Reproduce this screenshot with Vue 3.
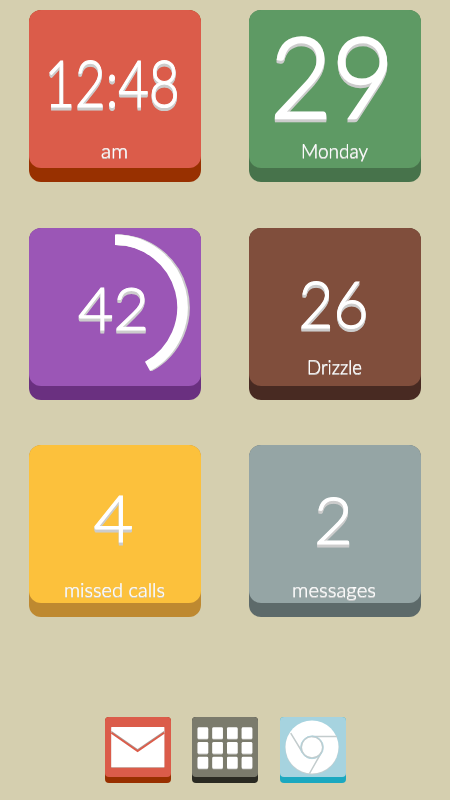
<script setup>
import { ref } from 'vue';

const tiles = ref([
    {
        name: 'clock', face: '#db5c4a', side: '#983000',
        value: { text: '12:48', x: 15.5, y: 96.5, size: 65, width: 135 },
        label: { text: 'am', x: 72, y: 148, width: 27 }
    },
    {
        name: 'date', face: '#5e9a64', side: '#47734b',
        value: { text: '29', x: 21, y: 107.5, size: 113, width: 124 },
        label: { text: 'Monday', x: 52, y: 148, width: 67 }
    },
    {
        name: 'battery', face: '#9b56b6', side: '#6a3080', level: 42,
        value: { text: '42', x: 49, y: 102, size: 60, width: 71 }
    },
    {
        name: 'weather', face: '#804e3c', side: '#482a22',
        value: { text: '26', x: 49.5, y: 100, size: 65, width: 70 },
        label: { text: 'Drizzle', x: 58, y: 146, width: 55 }
    },
    {
        name: 'calls', face: '#fcc13c', side: '#be8930',
        value: { text: '4', x: 64.5, y: 96.5, size: 66, width: 40 },
        label: { text: 'missed calls', x: 35, y: 152, width: 101 }
    },
    {
        name: 'messages', face: '#95a5a5', side: '#5d6a6a',
        value: { text: '2', x: 65, y: 98.5, size: 66, width: 39 },
        label: { text: 'messages', x: 43, y: 152, width: 84 }
    }
]);

const radius = 67.5;
const arc = (level) => {
    const angle = level / 100 * 2 * Math.PI;
    const x = 86 + radius * Math.sin(angle);
    const y = 79.3 - radius * Math.cos(angle);
    return `M86 ${79.3 - radius}A${radius} ${radius} 0 ${level > 50 ? 1 : 0} 1 ${x} ${y}`;
};
</script>

<template>
    <main class="home">
        <div class="tiles">
            <section v-for="tile in tiles" :key="tile.name" class="tile" :style="{ backgroundColor: tile.side }">
                <svg class="face" :style="{ backgroundColor: tile.face }" width="172" height="158" viewBox="0 0 172 158">
                    <g v-if="tile.level" class="gauge">
                        <path :d="arc(tile.level)" />
                    </g>
                    <text
                        class="value"
                        :class="tile.name"
                        :x="tile.value.x"
                        :y="tile.value.y"
                        :font-size="tile.value.size"
                        :textLength="tile.value.width"
                        lengthAdjust="spacingAndGlyphs"
                    >{{ tile.value.text }}</text>
                    <text
                        v-if="tile.label"
                        class="label"
                        :x="tile.label.x"
                        :y="tile.label.y"
                        :textLength="tile.label.width"
                        lengthAdjust="spacingAndGlyphs"
                    >{{ tile.label.text }}</text>
                </svg>
            </section>
        </div>

        <nav class="dock">
            <button class="mail" aria-label="Mail">
                <svg width="66" height="60" viewBox="0 0 66 60">
                    <path fill="#c9beb9" d="M6.3 10.7h53v40h-53z" />
                    <path fill="#fff" d="M6.3 10h53v40h-53z" />
                    <path fill="none" stroke="#aaa09c" stroke-width="1.2" d="M6.3 14.4L32.6 32.8L59.3 14.4" />
                    <path fill="none" stroke="#db5c4a" stroke-width="1.8" d="M6.3 15.7L32.6 34.1L59.3 15.7" />
                </svg>
            </button>
            <button class="apps" aria-label="Apps">
                <svg width="66" height="60" viewBox="0 0 66 60">
                    <template v-for="row in 3">
                        <g v-for="col in 4" :key="row + '-' + col">
                            <rect fill="#c9c9c6" :x="5.6 + (col - 1) * 14.7" :y="11 + (row - 1) * 14.8" width="10.6" height="11.6" rx="1.3" />
                            <rect fill="#fff" :x="5.6 + (col - 1) * 14.7" :y="10.2 + (row - 1) * 14.8" width="10.6" height="11.6" rx="1.3" />
                        </g>
                    </template>
                </svg>
            </button>
            <button class="browser" aria-label="Browser">
                <svg width="66" height="60" viewBox="0 0 66 60">
                    <circle fill="#c3cfd1" cx="32" cy="30.8" r="26.7" />
                    <circle fill="#fff" cx="32" cy="30" r="26.5" />
                    <g fill="none" stroke="#c3cccd" stroke-width="1.5">
                        <circle cx="32" cy="30.3" r="10.7" />
                        <path d="M32 19.4H57M10.7 16.2L22.5 35.5M41.2 35.8L29.5 56.5" />
                    </g>
                    <circle fill="none" stroke="#a6d3df" stroke-width=".7" cx="32" cy="30.3" r="11.4" />
                </svg>
            </button>
        </nav>
    </main>
</template>

<style>
body {
    background-color: #d5cfaf;
}
</style>

<style scoped>
.home {
    display: flex;
    flex-direction: column;
    align-items: center;
    box-sizing: border-box;
    width: 450px;
    height: 800px;
    padding: 10px 0 17px;
    background-color: #d5cfaf;
    font-family: Lato, "Liberation Sans", sans-serif;
}

.tiles {
    display: grid;
    grid-template-columns: 172px 172px;
    column-gap: 48px;
    row-gap: 45.5px;
}

.tile {
    height: 172px;
    border-radius: 12px;
}

.face {
    display: block;
    border-radius: 12px;
    overflow: visible;
}

.value {
    fill: #fff;
    stroke: #fff;
    stroke-width: 1.1px;
    font-weight: 300;
    filter: drop-shadow(0 1px 0 #ccc) drop-shadow(0 2px 0 #ccc);
}

.value.date {
    stroke-width: 2.6px;
}

.label {
    fill: #fff;
    font-size: 19px;
    font-weight: 300;
    stroke: #fff;
    stroke-width: 0.2px;
    filter: drop-shadow(0 1px 0 #ccc);
}

.gauge path {
    fill: none;
    stroke: #fff;
    stroke-width: 10.6;
    filter: drop-shadow(1px 0.5px 0 #ccc) drop-shadow(1px 0.5px 0 #ccc);
}

.dock {
    display: flex;
    gap: 21.5px;
    margin-top: auto;
}

.dock button {
    display: flex;
    align-items: flex-start;
    width: 66px;
    height: 66px;
    padding: 0;
    border: none;
    border-radius: 4px;
}

.dock svg {
    border-radius: 4px;
}

.mail {
    background-color: #983000;
}

.mail svg {
    background-color: #db5c4a;
}

.apps {
    background-color: #2a2a22;
}

.apps svg {
    background-color: #7b7b6c;
}

.browser {
    background-color: #1ba8c0;
}

.browser svg {
    background-color: #a6d3df;
}
</style>
